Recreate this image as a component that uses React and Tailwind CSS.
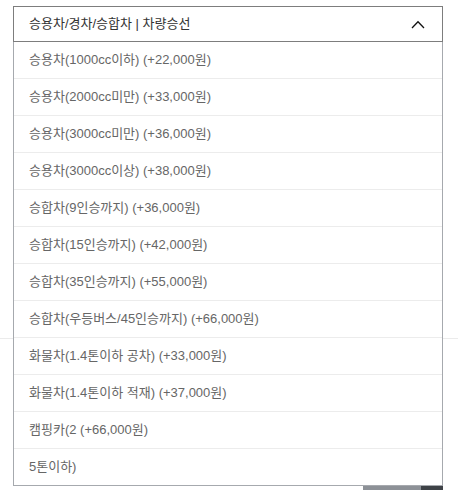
import React from "react";

const options = [
  "승용차(1000cc이하) (+22,000원)",
  "승용차(2000cc미만) (+33,000원)",
  "승용차(3000cc미만) (+36,000원)",
  "승용차(3000cc이상) (+38,000원)",
  "승합차(9인승까지) (+36,000원)",
  "승합차(15인승까지) (+42,000원)",
  "승합차(35인승까지) (+55,000원)",
  "승합차(우등버스/45인승까지) (+66,000원)",
  "화물차(1.4톤이하 공차) (+33,000원)",
  "화물차(1.4톤이하 적재) (+37,000원)",
  "캠핑카(2 (+66,000원)",
  "5톤이하)",
];

const font = { fontFamily: '"Liberation Sans", Arial, "Noto Sans CJK KR", sans-serif' };

export default function App() {
  return (
    <div className="relative w-[458px] h-[498px] bg-white overflow-hidden pt-[6px] pl-[13px]" style={font}>
      {/* page content showing behind the open dropdown */}
      <div className="absolute left-0 right-0 top-[338px] h-px bg-[#ebebeb]" />
      <div className="absolute left-[363px] top-[486px] w-[80px] h-[4px] flex">
        <div className="flex-1 bg-[#8d9197]" />
        <div className="w-[22px] bg-[#3e4247]" />
      </div>

      <div className="relative w-[430px]">
        <div className="h-[36px] border border-[#7d7d7d] bg-white flex items-center justify-between pl-[15px] pr-[17px]">
          <span className="text-[13px] text-[#333]">승용차/경차/승합차 | 차량승선</span>
          <svg width="14" height="9" viewBox="0 0 14 9" fill="none">
            <path d="M1 8 L7 1.8 L13 8" stroke="#111" strokeWidth="1.3" />
          </svg>
        </div>
        <ul className="bg-white border-x border-b border-[#a6a9ae]">
          {options.map((label, i) => (
            <li
              key={i}
              className={
                "flex items-center pl-[15px] text-[13px] text-[#666] " +
                (i < options.length - 1 ? "h-[37px] border-b border-[#ececec]" : "h-[36px]")
              }
            >
              {label}
            </li>
          ))}
        </ul>
      </div>
    </div>
  );
}
